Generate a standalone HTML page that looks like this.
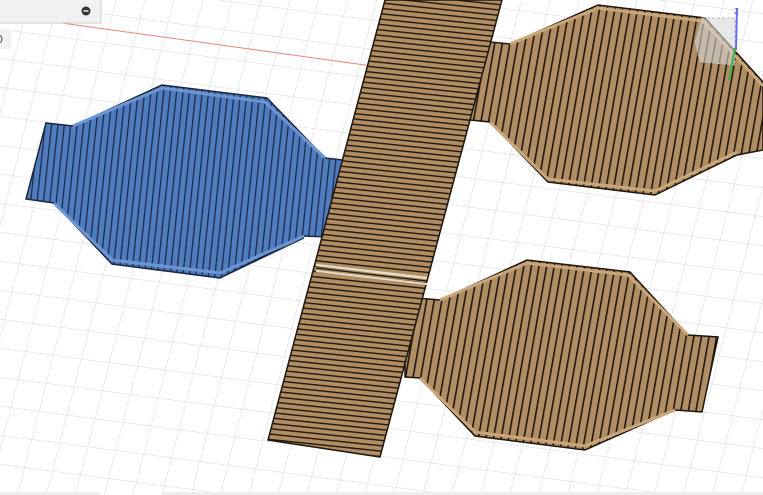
<!DOCTYPE html>
<html><head><style>html,body{margin:0;padding:0;background:#fff;overflow:hidden}svg{display:block}</style></head>
<body>
<svg width="763" height="495" viewBox="0 0 763 495" xmlns="http://www.w3.org/2000/svg">
<defs>
<pattern id="grid" width="28" height="29" patternUnits="userSpaceOnUse" patternTransform="skewY(7.5) skewX(-14)">
<path d="M0 0H28M0 0V29" stroke="#d6d6d6" stroke-width="1" fill="none"/>
</pattern>
<pattern id="blue" width="6.4" height="10" patternUnits="userSpaceOnUse" patternTransform="skewX(-6)">
<rect width="6.4" height="10" fill="#4f7cbf"/><rect width="1.3" height="10" fill="#1c2b47"/>
</pattern>
<pattern id="tanv" width="7.6" height="10" patternUnits="userSpaceOnUse" patternTransform="skewX(-10)">
<rect width="7.6" height="10" fill="#b08d62"/><rect width="1.6" height="10" fill="#1e160c"/>
</pattern>
<pattern id="tanh" width="10" height="5.4" patternUnits="userSpaceOnUse" patternTransform="skewY(6)">
<rect width="10" height="5.4" fill="#b08d62"/><rect width="10" height="1.4" fill="#1e160c"/>
</pattern>
</defs>
<rect width="763" height="495" fill="#fff"/>
<rect width="763" height="495" fill="url(#grid)"/>
<line x1="40" y1="20" x2="372" y2="66" stroke="#f08080" stroke-width="1"/>
<!-- blue -->
<polygon points="46,123 73,126 162,85 267,98 325,158 343,160 328,237 304,236 220,278 112,264 54,203 26,199" fill="url(#blue)" stroke="#1a2640" stroke-width="1.5"/>
<polyline points="73,126 162,88 265,102 325,158" fill="none" stroke="#6d95d3" stroke-width="3"/>
<polyline points="54,203 112,260 220,273 304,236" fill="none" stroke="#6d95d3" stroke-width="3"/>
<polyline points="112,264 220,278 304,238" fill="none" stroke="#1a2640" stroke-width="1.2"/>
<!-- top-right tan -->
<polygon points="470,40 510,44 598,5 705,18 763,82 763,150 737,155 655,195 548,182 490,122 470,120" fill="url(#tanv)" stroke="#1e160c" stroke-width="1.5"/>
<polyline points="510,44 598,8 703,21 763,86" fill="none" stroke="#c9a77a" stroke-width="3"/>
<polyline points="490,122 548,179 655,191 737,152" fill="none" stroke="#c9a77a" stroke-width="3"/>
<!-- bottom-right tan -->
<polygon points="405,297 440,300 527,260 630,272 688,335 718,337 702,412 675,410 585,450 475,436 420,378 405,377" fill="url(#tanv)" stroke="#1e160c" stroke-width="1.5"/>
<polyline points="440,300 527,263 628,275 688,335" fill="none" stroke="#c9a77a" stroke-width="3"/>
<polyline points="420,378 475,432 585,446 675,410" fill="none" stroke="#c9a77a" stroke-width="3"/>
<!-- strip -->
<polygon points="385,0 502,0 380,457 268,440" fill="url(#tanh)" stroke="#1e160c" stroke-width="1.5"/>
<line x1="316" y1="265" x2="427" y2="278" stroke="#e6dccb" stroke-width="2.5"/>
<line x1="316" y1="268" x2="427" y2="281" stroke="#1e160c" stroke-width="1.2"/>
<line x1="316" y1="271" x2="427" y2="284" stroke="#e6dccb" stroke-width="2"/>
<!-- nav cube -->
<polygon points="702,18 735,18 735,65 700,62 695,42" fill="#d8d8d8" fill-opacity="0.6" stroke="#bbb" stroke-dasharray="3,2"/>
<line x1="737" y1="8" x2="736" y2="50" stroke="#6a6cf0" stroke-width="2"/>
<text x="734" y="14" font-family="Liberation Sans, sans-serif" font-size="8" fill="#6a6cf0">Z</text>
<line x1="735" y1="48" x2="729" y2="80" stroke="#3bb23b" stroke-width="2"/>
<!-- UI panels -->
<rect x="-1" y="-1" width="102" height="24" fill="#f1f1f1" stroke="#cfcfcf"/>
<circle cx="86" cy="11" r="4.5" fill="#333"/><rect x="83.5" y="10.3" width="5" height="1.4" fill="#fff"/>
<rect x="-1" y="29" width="12" height="20" fill="#f1f1f1"/>
<circle cx="-2" cy="39" r="4" fill="none" stroke="#444" stroke-width="1"/>
<rect x="0" y="492" width="100" height="3" fill="#eee"/>
<rect x="163" y="492" width="600" height="3" fill="#eee"/>
</svg>
</body></html>
